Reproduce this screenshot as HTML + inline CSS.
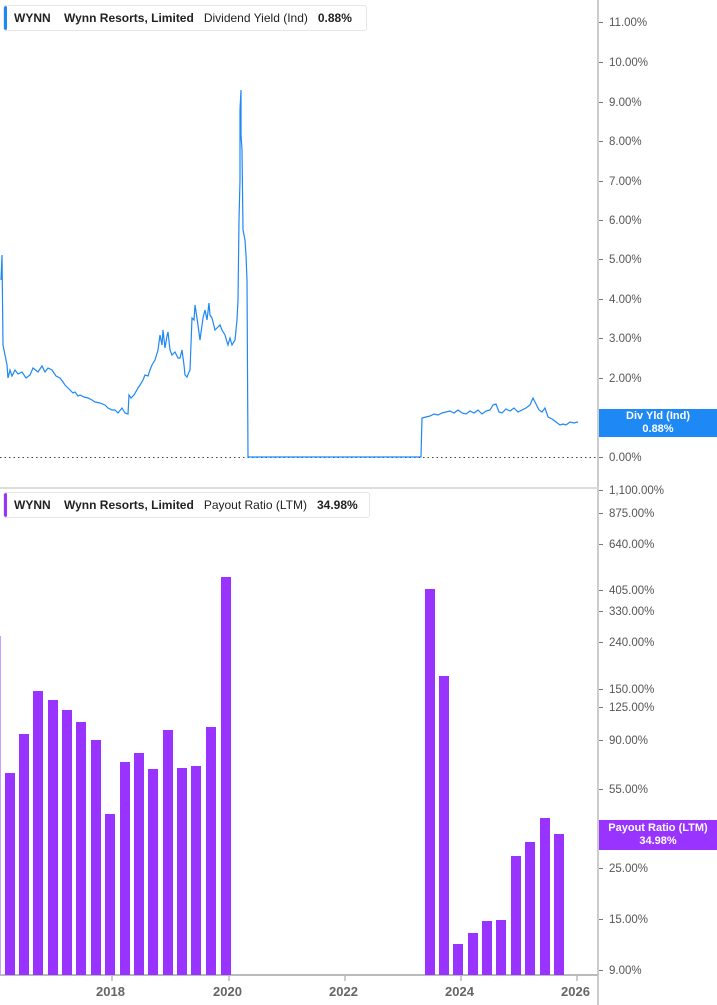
<!DOCTYPE html>
<html><head><meta charset="utf-8"><style>
body{margin:0;width:717px;height:1005px;background:#fff;font-family:"Liberation Sans",sans-serif;overflow:hidden;position:relative}
.leg{position:absolute;left:3px;height:24px;background:#fff;border:1px solid #e6e6e6;border-radius:3px;font-size:12px;color:#222;line-height:24px;white-space:nowrap;padding-left:10px;padding-right:6px;overflow:hidden}
.leg b{font-weight:bold}
.leg i{position:absolute;left:0;top:0;bottom:0;width:3px;border-radius:2px}
.ax{position:absolute;left:609px;font-size:11.5px;color:#555;margin-top:3px}
.tk{position:absolute;left:599px;width:4px;height:1px;background:#777}
.xl{position:absolute;top:984px;font-size:13px;font-weight:bold;color:#666}
</style></head><body>
<svg width="717" height="1005" style="position:absolute;left:0;top:0">
<line x1="598" y1="0" x2="598" y2="1005" stroke="#999" stroke-width="1"/>
<line x1="0" y1="488" x2="598" y2="488" stroke="#ddd" stroke-width="2"/>
<line x1="0" y1="457.5" x2="598" y2="457.5" stroke="#444" stroke-width="1" stroke-dasharray="1.5,3"/>
<line x1="0" y1="975" x2="598" y2="975" stroke="#bbb" stroke-width="2"/>
<g stroke="#999"><line x1="112" y1="976" x2="112" y2="981"/><line x1="229" y1="976" x2="229" y2="981"/><line x1="345" y1="976" x2="345" y2="981"/><line x1="461" y1="976" x2="461" y2="981"/><line x1="577" y1="976" x2="577" y2="981"/></g>
<polyline fill="none" stroke="#1e88f5" stroke-width="1.2" points="1,280 2,255 3,345 5,355 7,365 8,378 10,370 12,376 15,370 18,374 22,372 26,378 30,375 33,368 38,372 42,366 45,372 48,368 52,370 56,376 60,378 63,382 65,385 68,388 70,390 73,393 75,392 78,396 80,395 84,397 88,398 92,400 95,402 100,403 105,405 108,408 112,410 115,410 118,413 122,408 125,413 128,414 129,395 131,398 134,395 138,388 140,385 143,380 145,375 148,376 150,370 152,365 155,360 158,350 160,335 162,345 163,330 165,348 167,336 168,332 170,350 172,355 175,352 178,358 180,358 182,350 184,365 185,375 187,377 189,372 190,370 192,318 194,320 195,305 197,318 200,340 203,318 205,310 207,320 209,303 210,315 212,318 215,330 217,328 220,325 222,330 225,335 227,342 228,345 230,338 232,345 235,340 237,320 238,300 239,220 240,180 240,110 241,90 241,135 242,150 243,230 244,235 245,240 246,255 247,280 248,457 421,457 422,418 426,417 430,416 434,414 438,415 442,413 446,412 450,411 454,413 458,410 462,413 466,414 470,411 474,413 478,410 482,414 486,411 490,410 493,405 496,404 499,412 502,413 506,409 510,411 514,408 518,412 522,410 526,408 530,405 533,398 536,404 539,410 542,412 545,408 548,417 552,419 556,422 560,425 563,424 566,425 570,422 574,423 578,422"/>
<g fill="#9933ff">
<rect x="0" y="636" width="1" height="339" fill="#c9a0ff"/>
<rect x="5" y="773" width="10" height="202"/>
<rect x="19" y="734" width="10" height="241"/>
<rect x="33" y="691" width="10" height="284"/>
<rect x="48" y="700" width="10" height="275"/>
<rect x="62" y="710" width="10" height="265"/>
<rect x="76" y="722" width="10" height="253"/>
<rect x="91" y="740" width="10" height="235"/>
<rect x="105" y="814" width="10" height="161"/>
<rect x="120" y="762" width="10" height="213"/>
<rect x="134" y="753" width="10" height="222"/>
<rect x="148" y="769" width="10" height="206"/>
<rect x="163" y="730" width="10" height="245"/>
<rect x="177" y="768" width="10" height="207"/>
<rect x="191" y="766" width="10" height="209"/>
<rect x="206" y="727" width="10" height="248"/>
<rect x="221" y="577" width="10" height="398"/>
<rect x="425" y="589" width="10" height="386"/>
<rect x="439" y="676" width="10" height="299"/>
<rect x="453" y="944" width="10" height="31"/>
<rect x="468" y="933" width="10" height="42"/>
<rect x="482" y="921" width="10" height="54"/>
<rect x="496" y="920" width="10" height="55"/>
<rect x="511" y="856" width="10" height="119"/>
<rect x="525" y="842" width="10" height="133"/>
<rect x="540" y="818" width="10" height="157"/>
<rect x="554" y="834" width="10" height="141"/>
</g>
</svg>
<div class="leg" style="top:5px;width:346px"><i style="background:#1e88f5"></i><b>WYNN</b>&nbsp;&nbsp;&nbsp;&nbsp;<b>Wynn Resorts, Limited</b>&nbsp;&nbsp;&nbsp;Dividend Yield (Ind)&nbsp;&nbsp;&nbsp;<b>0.88%</b></div>
<div class="leg" style="top:492px;width:349px"><i style="background:#9933ff"></i><b>WYNN</b>&nbsp;&nbsp;&nbsp;&nbsp;<b>Wynn Resorts, Limited</b>&nbsp;&nbsp;&nbsp;Payout Ratio (LTM)&nbsp;&nbsp;&nbsp;<b>34.98%</b></div>

<div class="ax" style="top:14px">11.00%</div><div class="tk" style="top:22px"></div>
<div class="ax" style="top:54px">10.00%</div><div class="tk" style="top:62px"></div>
<div class="ax" style="top:94px">9.00%</div><div class="tk" style="top:102px"></div>
<div class="ax" style="top:133px">8.00%</div><div class="tk" style="top:141px"></div>
<div class="ax" style="top:173px">7.00%</div><div class="tk" style="top:181px"></div>
<div class="ax" style="top:212px">6.00%</div><div class="tk" style="top:220px"></div>
<div class="ax" style="top:251px">5.00%</div><div class="tk" style="top:259px"></div>
<div class="ax" style="top:291px">4.00%</div><div class="tk" style="top:299px"></div>
<div class="ax" style="top:330px">3.00%</div><div class="tk" style="top:338px"></div>
<div class="ax" style="top:370px">2.00%</div><div class="tk" style="top:378px"></div>
<div class="ax" style="top:449px">0.00%</div><div class="tk" style="top:457px"></div>
<div style="position:absolute;left:599px;top:409px;width:118px;height:28px;background:#1e88f5;color:#fff;font-size:11px;font-weight:bold;text-align:center;line-height:13px;padding-top:1px;box-sizing:border-box">Div Yld (Ind)<br>0.88%</div>

<div class="ax" style="top:482px">1,100.00%</div><div class="tk" style="top:490px"></div>
<div class="ax" style="top:505px">875.00%</div><div class="tk" style="top:513px"></div>
<div class="ax" style="top:536px">640.00%</div><div class="tk" style="top:544px"></div>
<div class="ax" style="top:582px">405.00%</div><div class="tk" style="top:590px"></div>
<div class="ax" style="top:603px">330.00%</div><div class="tk" style="top:611px"></div>
<div class="ax" style="top:634px">240.00%</div><div class="tk" style="top:642px"></div>
<div class="ax" style="top:681px">150.00%</div><div class="tk" style="top:689px"></div>
<div class="ax" style="top:699px">125.00%</div><div class="tk" style="top:707px"></div>
<div class="ax" style="top:732px">90.00%</div><div class="tk" style="top:740px"></div>
<div class="ax" style="top:781px">55.00%</div><div class="tk" style="top:789px"></div>
<div class="ax" style="top:860px">25.00%</div><div class="tk" style="top:868px"></div>
<div class="ax" style="top:911px">15.00%</div><div class="tk" style="top:919px"></div>
<div class="ax" style="top:962px">9.00%</div><div class="tk" style="top:970px"></div>
<div style="position:absolute;left:599px;top:820px;width:118px;height:30px;background:#9933ff;color:#fff;font-size:11px;font-weight:bold;text-align:center;line-height:13px;padding-top:2px;box-sizing:border-box">Payout Ratio (LTM)<br>34.98%</div>

<div class="xl" style="left:96px">2018</div>
<div class="xl" style="left:213px">2020</div>
<div class="xl" style="left:329px">2022</div>
<div class="xl" style="left:445px">2024</div>
<div class="xl" style="left:561px">2026</div>
</body></html>
